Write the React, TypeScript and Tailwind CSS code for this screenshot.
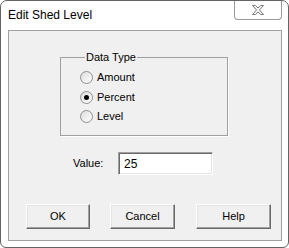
import React from "react"

const uiFont = { fontFamily: '"Liberation Sans", Arial, sans-serif' }

function Radio({ label, checked }: { label: string; checked?: boolean }) {
  return (
    <div className="flex items-center h-[19.5px]">
      <span className="w-[13px] h-[13px] rounded-full border border-[#8e8f8f] bg-gradient-to-br from-[#dcdcdc] to-white flex items-center justify-center">
        {checked && <span className="w-[5px] h-[5px] rounded-full bg-black" />}
      </span>
      <span className="ml-[4px] text-[11px] leading-[13px] text-black">{label}</span>
    </div>
  )
}

function Button({ label, w, ml }: { label: string; w: string; ml: string }) {
  return (
    <button
      className={`${w} ${ml} h-[25px] bg-[#f0f0f0] border border-t-white border-l-white border-r-[#696969] border-b-[#696969] shadow-[inset_-1px_-1px_0_#a0a0a0,inset_1px_1px_0_#e3e3e3] text-[11px] text-black flex items-center justify-center`}
    >
      {label}
    </button>
  )
}

export default function App() {
  return (
    <div className="w-[289px] h-[248px] bg-white" style={uiFont}>
      <div className="w-[289px] h-[248px] border border-[#646464] rounded-t-[7px] rounded-b-[6px] bg-white flex flex-col">
        <div className="h-[29px] flex items-start pl-[7px] pr-[6px]">
          <span className="mt-[7px] text-[12px] leading-[15px] text-black">Edit Shed Level</span>
          <div className="ml-auto w-[48px] h-[19px] border border-t-0 border-[#9a9a9a] rounded-b-[4px] bg-white flex items-center justify-center">
            <svg width="12" height="10" viewBox="0 0 12 10">
              <path
                d="M0.5 0.5h3l2.5 2.5l2.5-2.5h3l-4 4.5l4 4.5h-3l-2.5-2.5l-2.5 2.5h-3l4-4.5z"
                fill="#f4f4f4"
                stroke="#7a7a7a"
                strokeWidth="1"
                strokeLinejoin="round"
              />
            </svg>
          </div>
        </div>
        <div className="mx-[7px] mr-[6px] h-[211px] border border-[#a0a0a0] bg-[#f0f0f0] flex flex-col">
          <fieldset className="ml-[51px] mt-[20px] w-[168px] h-[85px] border border-[#a0a0a0] shadow-[1px_1px_0_white] pl-[19px] pt-[4px]">
            <legend className="ml-[5px] px-[1px] text-[11px] leading-[13px] text-black">Data Type</legend>
            <Radio label="Amount" />
            <Radio label="Percent" checked />
            <Radio label="Level" />
          </fieldset>
          <div className="mt-[16px] flex items-center">
            <span className="ml-[64px] w-[45px] text-[11px] leading-[13px] text-black">Value:</span>
            <div className="w-[95px] h-[23px] border border-t-[#a0a0a0] border-l-[#a0a0a0] border-r-white border-b-white shadow-[inset_1px_1px_0_#696969,inset_-1px_-1px_0_#e3e3e3] bg-white flex items-center pl-[5px] text-[12px] text-black">
              25
            </div>
          </div>
          <div className="mt-[29px] flex">
            <Button label="OK" w="w-[64px]" ml="ml-[17px]" />
            <Button label="Cancel" w="w-[65px]" ml="ml-[20px]" />
            <Button label="Help" w="w-[75px]" ml="ml-[21px]" />
          </div>
        </div>
      </div>
    </div>
  )
}
